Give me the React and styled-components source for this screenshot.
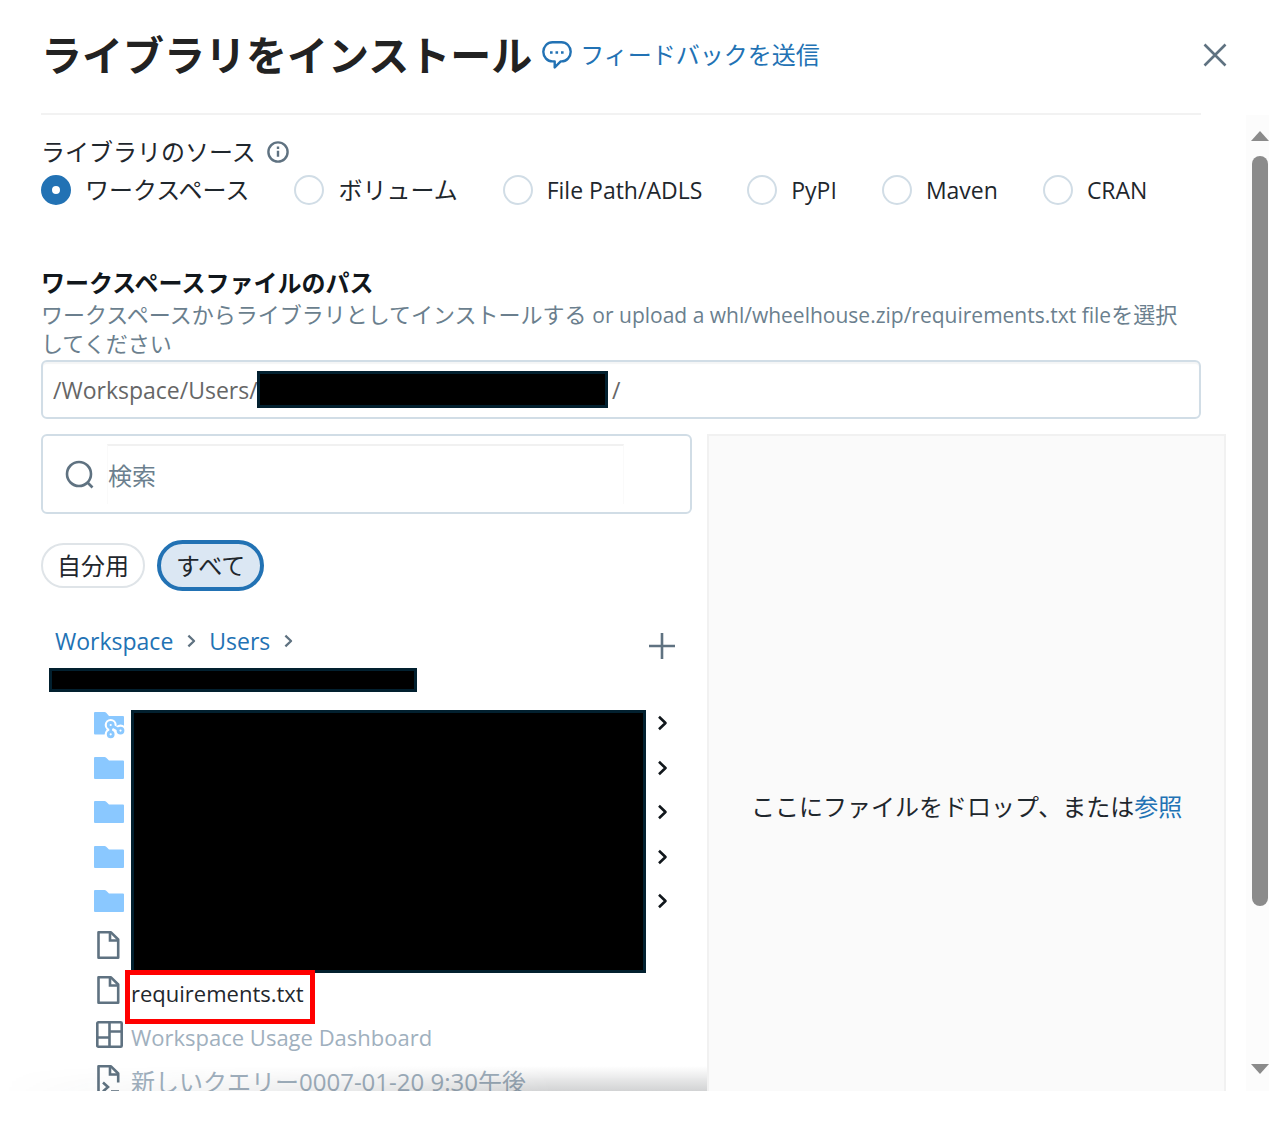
import React, { useState } from 'react';
import styled, { createGlobalStyle, css } from 'styled-components';

const sources = [
  { id: 'workspace', label: 'ワークスペース' },
  { id: 'volume', label: 'ボリューム' },
  { id: 'adls', label: 'File Path/ADLS', latin: true },
  { id: 'pypi', label: 'PyPI', latin: true },
  { id: 'maven', label: 'Maven', latin: true },
  { id: 'cran', label: 'CRAN', latin: true },
];

const entries = [
  { id: 1, icon: 'repo', folder: true },
  { id: 2, icon: 'folder', folder: true },
  { id: 3, icon: 'folder', folder: true },
  { id: 4, icon: 'folder', folder: true },
  { id: 5, icon: 'folder', folder: true },
  { id: 6, icon: 'file' },
  { id: 7, icon: 'file', name: 'requirements.txt', latin: true, marked: true },
  { id: 8, icon: 'dashboard', name: 'Workspace Usage Dashboard', latin: true, disabled: true },
  { id: 9, icon: 'query', name: '新しいクエリー0007-01-20 9:30午後', disabled: true },
];

const FolderIcon = () => (
  <svg width="30" height="24" viewBox="0 0 30 24" fill="#8ac8ff" aria-hidden="true">
    <path d="M1 1h9.500q1 0 1.700.7L15 4.500h14q1 0 1 1V22q0 1-1 1H1q-1 0-1-1V2q0-1 1-1z" />
  </svg>
);

const RepoIcon = () => (
  <svg width="31" height="31" viewBox="0 -4 31 31" aria-hidden="true">
    <path
      d="M1 0h9.500q1 0 1.700.7L15 4h14q1 0 1 1v16.500q0 1-1 1H1q-1 0-1-1V1q0-1 1-1z"
      fill="#8ac8ff"
    />
    <g fill="#fff">
      <circle cx="16.700" cy="13" r="6" />
      <circle cx="16.700" cy="22.300" r="6" />
      <circle cx="26.500" cy="18.600" r="6" />
      <path d="M17 13l10 5.600-10 6z" />
    </g>
    <g fill="#fff" stroke="#8ac8ff" strokeWidth="2.800">
      <path d="M16.700 13v9.300M17.500 13.500l8 4.500" />
      <circle cx="16.700" cy="13" r="2.500" />
      <circle cx="16.700" cy="22.300" r="2.500" />
      <circle cx="26.500" cy="18.600" r="2.500" />
    </g>
  </svg>
);

const FileIcon = () => (
  <svg width="24" height="28" viewBox="0 0 24 28" fill="none" stroke="#5f7281" strokeWidth="2.600" aria-hidden="true">
    <path d="M1.500 1.300h12.500l7.200 7.200v18.200H1.500z" strokeLinejoin="round" />
    <path d="M13 1.300v8.200h8.200" />
  </svg>
);

const DashboardIcon = () => (
  <svg width="27" height="27" viewBox="0 0 27 27" fill="none" stroke="#5f7281" strokeWidth="2.600" aria-hidden="true">
    <rect x="1.300" y="1.300" width="24.400" height="24.400" rx="1" />
    <path d="M13.500 1.300v24.400M1.300 16.500h12.200M13.500 10.500h12.200" />
  </svg>
);

const QueryIcon = () => (
  <svg width="24" height="28" viewBox="0 0 24 28" fill="none" stroke="#5f7281" strokeWidth="2.600" aria-hidden="true">
    <path d="M1.500 27V1.300h12.500l7.200 7.200v9" strokeLinejoin="round" />
    <path d="M13 1.300v8.200h8.200M6 17.500l5 4.500-5 4.500" />
    <path d="M14 26.500h8" />
  </svg>
);

const ChevronIcon = ({ size = 16, color = '#11171c', weight = 2.6 }) => (
  <svg width={size} height={size} viewBox="0 0 16 16" fill="none" stroke={color} strokeWidth={weight} aria-hidden="true">
    <path d="M5 1.800l6.500 6.200L5 14.200" strokeLinejoin="round" />
  </svg>
);

const icons = {
  repo: RepoIcon,
  folder: FolderIcon,
  file: FileIcon,
  dashboard: DashboardIcon,
  query: QueryIcon,
};

const App = () => {
  const [source, setSource] = useState('workspace');
  const [path, setPath] = useState('/Workspace/Users/');
  const [search, setSearch] = useState('');
  const [filter, setFilter] = useState('all');

  return (
    <Dialog role="dialog" aria-labelledby="dialog-title">
      <GlobalStyle />
      <Header>
        <Title id="dialog-title">ライブラリをインストール</Title>
        <FeedbackLink href="#feedback">
          <svg width="30" height="28" viewBox="0 0 30 28" fill="none" stroke="#2272b4" strokeWidth="2.400" aria-hidden="true">
            <path
              d="M10.500 1.200h9c5 0 9.200 4.300 9.200 9.600s-4.200 9.600-9.200 9.600h-.8l-6 6v-6h-2.200c-5 0-9.200-4.300-9.200-9.600s4.200-9.600 9.200-9.600z"
              strokeLinejoin="round"
            />
            <path d="M8 11.500h2.600M13.500 11.500h2.600M19 11.500h2.600" strokeWidth="2.600" />
          </svg>
          フィードバックを送信
        </FeedbackLink>
        <CloseButton type="button" aria-label="閉じる">
          <svg width="24" height="24" viewBox="0 0 24 24" stroke="#5f7281" strokeWidth="2.600" aria-hidden="true">
            <path d="M1.500 1.500l21 21M22.500 1.500l-21 21" />
          </svg>
        </CloseButton>
      </Header>

      <ScrollArea>
        <Content>
          <Fields>
            <SourceGroup>
              <SourceLegend>
                ライブラリのソース
                <svg width="22" height="22" viewBox="0 0 22 22" fill="none" stroke="#5f7281" strokeWidth="2.400" aria-hidden="true">
                  <circle cx="11" cy="11" r="9.600" />
                  <path d="M11 9.800v6M11 5.600v2.400" />
                </svg>
              </SourceLegend>
              <RadioRow>
                {sources.map((item) => (
                  <RadioLabel key={item.id} $latin={item.latin}>
                    <Radio
                      type="radio"
                      name="source"
                      value={item.id}
                      checked={source === item.id}
                      onChange={() => setSource(item.id)}
                    />
                    {item.label}
                  </RadioLabel>
                ))}
              </RadioRow>
            </SourceGroup>

            <PathLabel htmlFor="file-path">ワークスペースファイルのパス</PathLabel>
            <PathHint>
              ワークスペースからライブラリとしてインストールする{' '}
              <HintLatin>or upload a whl/wheelhouse.zip/requirements.txt file</HintLatin>を選択してください
            </PathHint>
            <PathField>
              <PathInput id="file-path" value={path} onChange={(e) => setPath(e.target.value)} />
              <PathMask />
              <span>/</span>
            </PathField>
          </Fields>

          <Columns>
            <Browser>
              <SearchField>
                <svg width="30" height="30" viewBox="0 0 30 30" fill="none" stroke="#5f7281" strokeWidth="2.600" aria-hidden="true">
                  <circle cx="14" cy="15" r="12" />
                  <path d="M22.500 23.500l5 5" />
                </svg>
                <SearchInput
                  type="text"
                  aria-label="検索"
                  placeholder="検索"
                  value={search}
                  onChange={(e) => setSearch(e.target.value)}
                />
              </SearchField>

              <Filters>
                <Pill type="button" $active={filter === 'mine'} onClick={() => setFilter('mine')}>
                  自分用
                </Pill>
                <Pill type="button" $active={filter === 'all'} onClick={() => setFilter('all')}>
                  すべて
                </Pill>
              </Filters>

              <Toolbar>
                <Breadcrumb>
                  <a href="#workspace">Workspace</a>
                  <ChevronIcon size={14} color="#5f7281" />
                  <a href="#users">Users</a>
                  <ChevronIcon size={14} color="#5f7281" />
                </Breadcrumb>
                <AddButton type="button" aria-label="追加">
                  <svg width="26" height="26" viewBox="0 0 26 26" stroke="#5f7281" strokeWidth="2.600" aria-hidden="true">
                    <path d="M13 0v26M0 13h26" />
                  </svg>
                </AddButton>
              </Toolbar>
              <CrumbMask />

              <EntryList>
                <ListMask />
                {entries.map((entry) => {
                  const Icon = icons[entry.icon];
                  return (
                    <Entry key={entry.id}>
                      <EntryIcon>
                        <Icon />
                      </EntryIcon>
                      {entry.name && (
                        <EntryName $latin={entry.latin} $disabled={entry.disabled}>
                          {entry.name}
                          {entry.marked && <Marker />}
                        </EntryName>
                      )}
                      {entry.folder && (
                        <OpenButton type="button" aria-label="開く">
                          <ChevronIcon />
                        </OpenButton>
                      )}
                    </Entry>
                  );
                })}
              </EntryList>
            </Browser>

            <DropZone>
              <span>
                ここにファイルをドロップ、または<a href="#browse">参照</a>
              </span>
            </DropZone>
          </Columns>
        </Content>

        <BottomShade />

        <Scrollbar aria-hidden="true">
          <svg width="18" height="10" viewBox="0 0 18 10" fill="#8b8b8b">
            <path d="M9 0l9 10H0z" />
          </svg>
          <ScrollTrack>
            <ScrollThumb />
          </ScrollTrack>
          <svg width="18" height="10" viewBox="0 0 18 10" fill="#8b8b8b">
            <path d="M0 0h18l-9 10z" />
          </svg>
        </Scrollbar>
      </ScrollArea>
    </Dialog>
  );
};

const GlobalStyle = createGlobalStyle`
  * {
    box-sizing: border-box;
  }

  body {
    margin: 0;
    background: #fff;
    color: #1f272d;
    font-family: 'Open Sans', 'Noto Sans CJK JP', sans-serif;
    font-size: 24px;
    line-height: 30px;
  }

  a {
    color: #2272b4;
    text-decoration: none;
  }

  button,
  input {
    font: inherit;
    color: inherit;
  }

  svg {
    display: block;
    flex-shrink: 0;
  }
`;

const iconButton = css`
  display: flex;
  padding: 0;
  border: none;
  background: none;
  cursor: pointer;
`;

const mask = css`
  background: #000;
  border: 3px solid #02202f;
`;

const Dialog = styled.div`
  display: flex;
  flex-direction: column;
  height: 100vh;
  padding-bottom: 34px;
`;

const Header = styled.header`
  display: flex;
  align-items: center;
  height: 115px;
  margin: 0 68px 0 41px;
  padding-bottom: 3px;
  border-bottom: 2px solid #f2f2f2;
`;

const Title = styled.h1`
  margin: 0;
  font-size: 41px;
  line-height: 56px;
  font-weight: 700;
  color: #222;
`;

const FeedbackLink = styled.a`
  display: flex;
  align-items: center;
  gap: 8px;
  margin-left: 10px;
`;

const CloseButton = styled.button`
  ${iconButton}
  margin-left: auto;
  margin-right: -26px;
`;

const ScrollArea = styled.div`
  position: relative;
  display: flex;
  flex: 1;
  min-height: 0;
  overflow: hidden;
`;

const Content = styled.div`
  flex: 1;
  min-width: 0;
  padding: 22px 20px 0 41px;
`;

const Fields = styled.div`
  margin-right: 25px;
`;

const SourceGroup = styled.fieldset`
  margin: 0 0 63px;
  padding: 0;
  border: none;
`;

const SourceLegend = styled.legend`
  display: flex;
  align-items: center;
  gap: 11px;
  padding: 0;
`;

const RadioRow = styled.div`
  display: flex;
  flex-wrap: wrap;
  gap: 45px;
  padding-top: 8px;
`;

const RadioLabel = styled.label`
  display: flex;
  align-items: center;
  gap: 14px;
  font-size: ${({ $latin }) => ($latin ? '23px' : '24px')};
`;

const Radio = styled.input`
  appearance: none;
  width: 30px;
  height: 30px;
  margin: 0;
  border: 2px solid #d1dde6;
  border-radius: 50%;
  background: #fff;

  &:checked {
    border: 11px solid #2272b4;
  }
`;

const PathLabel = styled.label`
  display: block;
  padding-bottom: 2px;
  font-weight: 700;
  color: #11171c;
`;

const PathHint = styled.p`
  margin: 0 0 2px;
  padding-right: 10px;
  font-size: 22px;
  line-height: 29px;
  color: #6b7f8e;
`;

const HintLatin = styled.span`
  font-size: 21px;
  line-height: 20px;
`;

const PathField = styled.div`
  display: flex;
  align-items: center;
  height: 59px;
  padding: 0 10px;
  border: 2px solid #d1dde6;
  border-radius: 6px;
  box-shadow: inset 0 2px 1px #f4f5f6;
  font-size: 23px;
  color: #666;
`;

const PathInput = styled.input`
  width: 204px;
  padding: 0;
  border: none;
  outline: none;
  background: none;
`;

const PathMask = styled.span`
  ${mask}
  width: 351px;
  height: 37px;
  margin-right: 4px;
`;

const Columns = styled.div`
  display: grid;
  grid-template-columns: 652fr 519fr;
  gap: 15px;
  margin-top: 15px;
`;

const Browser = styled.section`
  min-width: 0;
`;

const SearchField = styled.div`
  display: flex;
  align-items: center;
  gap: 12px;
  height: 80px;
  padding: 0 66px 0 22px;
  border: 2px solid #d1dde6;
  border-radius: 6px;
`;

const SearchInput = styled.input`
  flex: 1;
  min-width: 0;
  height: 60px;
  padding: 0;
  border: 1px solid #fafafa;
  border-top: 2px solid #f1f1f1;
  border-bottom: none;
  outline: none;
  background: none;

  &::placeholder {
    color: #6b7f8e;
    opacity: 1;
  }
`;

const Filters = styled.div`
  display: flex;
  align-items: center;
  gap: 12px;
  margin-top: 26px;
`;

const Pill = styled.button`
  height: 45px;
  padding: 0 14px;
  border: 2px solid #dfe4e8;
  border-radius: 26px;
  background: #fff;

  ${({ $active }) =>
    $active &&
    css`
      height: 51px;
      padding: 0 15px;
      border: 4px solid #2272b4;
      background: #dbe7f3;
    `}
`;

const Toolbar = styled.div`
  display: flex;
  align-items: flex-start;
  justify-content: space-between;
  height: 34px;
  margin-top: 34px;
  padding: 0 17px 0 14px;
`;

const Breadcrumb = styled.nav`
  display: flex;
  align-items: center;
  gap: 11px;
  font-size: 23px;
  line-height: 32px;
`;

const AddButton = styled.button`
  ${iconButton}
  align-self: flex-end;
`;

const CrumbMask = styled.div`
  ${mask}
  width: 368px;
  height: 24px;
  margin: 9px 0 9px 8px;
`;

const EntryList = styled.ul`
  position: relative;
  display: grid;
  grid-auto-rows: 1fr;
  min-height: 400px;
  margin: 0;
  padding: 0 22px 0 52px;
  list-style: none;
`;

const Entry = styled.li`
  display: flex;
  align-items: center;
  gap: 6px;
`;

const EntryIcon = styled.span`
  display: flex;
  justify-content: center;
  width: 32px;
`;

const EntryName = styled.span`
  position: relative;
  padding-top: 6px;
  font-size: ${({ $latin }) => ($latin ? '22px' : '24px')};
  line-height: 18px;
  color: ${({ $disabled }) => ($disabled ? '#a0b0be' : '#1f272d')};
`;

const Marker = styled.span`
  position: absolute;
  inset: -8px -11px -22px -6px;
  border: 5px solid #f00;
`;

const OpenButton = styled.button`
  ${iconButton}
  margin-left: auto;
`;

const ListMask = styled.li`
  ${mask}
  position: absolute;
  top: 9px;
  left: 90px;
  right: 46px;
  height: 263px;
`;

const DropZone = styled.section`
  display: flex;
  align-items: center;
  justify-content: center;
  min-height: 746px;
  border: 2px solid #f1f1f1;
  background: #fafafa;
`;

const BottomShade = styled.div`
  position: absolute;
  left: 0;
  bottom: 0;
  width: 707px;
  height: 25px;
  background: linear-gradient(to bottom, rgba(30, 40, 45, 0), rgba(30, 35, 40, 0.2));
  mask-image: linear-gradient(to right, transparent, rgba(0, 0, 0, 0.2) 25%, rgba(0, 0, 0, 0.5) 50%, #000 78%);
  pointer-events: none;
`;

const Scrollbar = styled.div`
  display: flex;
  flex-direction: column;
  align-items: center;
  gap: 15px;
  width: 23px;
  padding: 16px 0 17px 5px;
  background: #fcfcfc;
`;

const ScrollTrack = styled.div`
  flex: 1;
  width: 16px;
`;

const ScrollThumb = styled.div`
  height: 84%;
  border-radius: 8px;
  background: #8b8b8b;
`;

export default App;
